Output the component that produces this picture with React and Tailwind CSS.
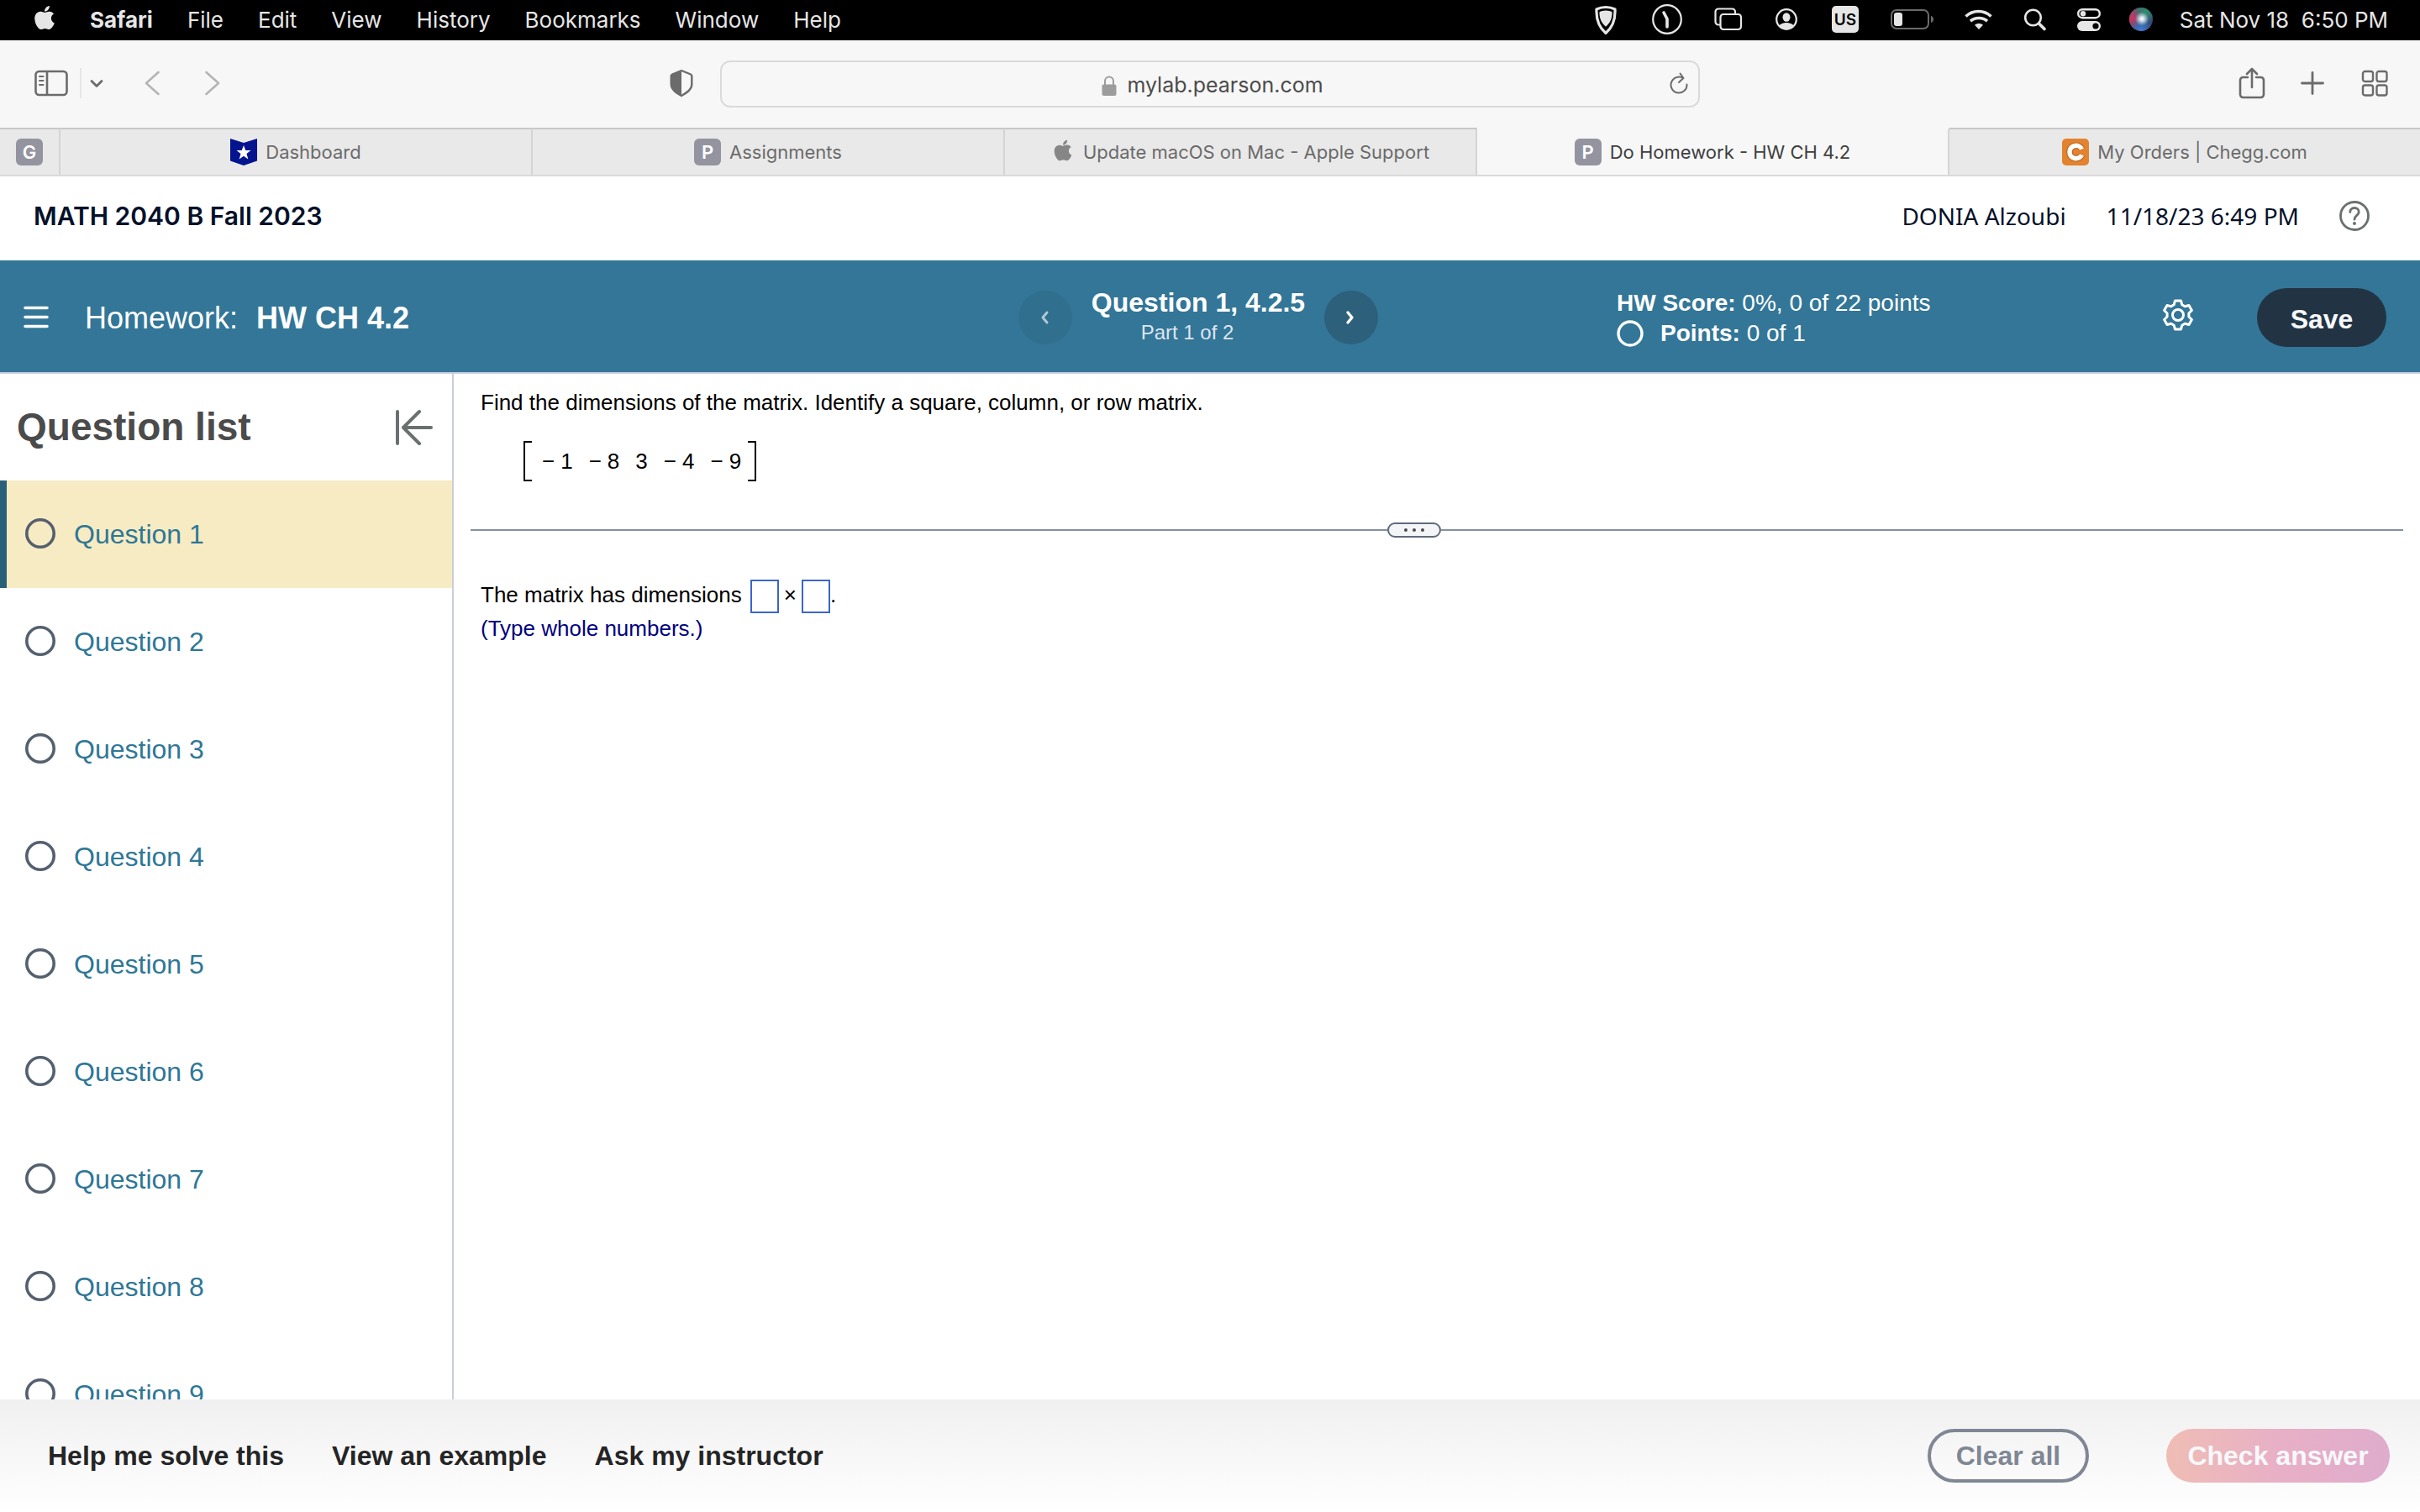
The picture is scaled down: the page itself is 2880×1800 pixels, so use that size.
import React, { useState } from 'react';
import { FaApple } from 'react-icons/fa';

const menus = ['File', 'Edit', 'View', 'History', 'Bookmarks', 'Window', 'Help'];
const questions = [1, 2, 3, 4, 5, 6, 7, 8, 9];
const matrix = ['1', '8', '3', '4', '9'];

// macOS menu bar
const MenuBar = () => {
  return (
    <div className="flex h-12 shrink-0 items-center justify-between bg-black pb-0.5 pl-10 pr-[38px] font-[Inter,sans-serif] text-[26px] text-[#e6e6e6]">
      <nav className="flex items-center gap-[41px]">
        <button type="button" aria-label="Apple menu" className="-mt-1 w-[26px]">
          <FaApple className="h-8 w-[26px]" />
        </button>
        <button type="button" className="font-bold">Safari</button>
        {menus.map((menu) => (
          <button type="button" key={menu}>{menu}</button>
        ))}
      </nav>
      <div className="flex items-center gap-8">
        <div className="flex items-center gap-[34px]">
          {/* Shield */}
          <svg className="h-9 w-[34px]" viewBox="0 0 34 36" fill="none">
            <path d="M13 3.500C9 3.500 5 4.500 2 6c-.5 10 1 20 11 28.500C23 26 24.500 16 24 6c-3-1.500-7-2.500-11-2.500z" stroke="#e6e6e6" strokeWidth="3.200" strokeLinejoin="round" />
            <path d="M13 7.500c-3 0-5.500.7-7.500 1.800-.2 6.500 1.500 12.500 7.500 17.500 6-5 7.700-11 7.500-17.500C18.500 8.200 16 7.500 13 7.500z" fill="#e6e6e6" />
          </svg>
          {/* Clock */}
          <svg className="h-9 w-10" viewBox="0 0 40 36" fill="none" stroke="#e6e6e6">
            <circle cx="18" cy="18" r="16.800" strokeWidth="2.200" />
            <path d="M14 10l4 7.500V27" strokeWidth="3.600" strokeLinecap="round" strokeLinejoin="round" />
          </svg>
          {/* Windows */}
          <svg className="h-7 w-[38px]" viewBox="0 0 38 28" fill="none" stroke="#e6e6e6" strokeWidth="2.200">
            <path d="M7 20.500H5A3.500 3.500 0 0 1 1.500 17V5A3.500 3.500 0 0 1 5 1.500h16.500A3.500 3.500 0 0 1 25 5v2" />
            <rect x="7.500" y="8" width="24.500" height="18" rx="3.500" />
          </svg>
          {/* User */}
          <svg className="h-7 w-[34px]" viewBox="0 0 34 28" fill="none">
            <circle cx="14" cy="14" r="11.800" stroke="#e6e6e6" strokeWidth="2.200" />
            <ellipse cx="14" cy="11.500" rx="4.500" ry="5.200" fill="#e6e6e6" />
            <path d="M5 22c2-3 5.500-4 9-4s7 1 9 4c-5 5-13 5-18 0z" fill="#e6e6e6" />
          </svg>
          {/* Input source */}
          <svg className="h-8 w-9" viewBox="0 0 36 32">
            <rect width="32" height="32" rx="5" fill="#e6e6e6" />
            <text x="16" y="23" textAnchor="middle" fontFamily="Inter" fontSize="19" fontWeight="600" fill="#000">US</text>
          </svg>
          {/* Battery */}
          <svg className="h-6 w-[54px]" viewBox="0 0 54 24" fill="none">
            <rect x="1" y="1" width="44" height="22" rx="6" stroke="#6b6b6b" strokeWidth="2" />
            <rect x="4" y="4" width="10" height="16" rx="3" fill="#e6e6e6" />
            <path d="M48 8c4 1 4 7 0 8z" fill="#6b6b6b" />
          </svg>
          {/* Wi-Fi */}
          <svg className="h-6 w-9" viewBox="0 0 36 24" fill="none" stroke="#e6e6e6" strokeWidth="3.600">
            <path d="M1.500 8.500c8.500-8 21.500-8 30 0" />
            <path d="M7 14.200c5.500-5 14.500-5 20 0" />
            <path d="M17 24l-5-5.200c2.800-2.400 7.200-2.400 10 0z" fill="#e6e6e6" stroke="none" />
          </svg>
          {/* Search */}
          <svg className="h-7 w-[30px]" viewBox="0 0 30 28" fill="none" stroke="#e6e6e6" strokeLinecap="round">
            <circle cx="11.500" cy="12" r="9.300" strokeWidth="2.600" />
            <path d="M18.500 19l6.500 6.500" strokeWidth="3.600" />
          </svg>
          {/* Control centre */}
          <svg className="h-7 w-7" viewBox="0 0 28 28" fill="none">
            <rect x="1.200" y="2.200" width="25.600" height="10" rx="5" stroke="#e6e6e6" strokeWidth="2.400" />
            <circle cx="7" cy="7.200" r="3.200" fill="#e6e6e6" />
            <rect y="16" width="28" height="12" rx="6" fill="#e6e6e6" />
            <circle cx="22" cy="22" r="3.600" fill="#000" />
          </svg>
          {/* Siri */}
          <svg className="h-7 w-7" viewBox="0 0 28 28">
            <defs>
              <linearGradient id="siriBase" x1="0" y1="0" x2="1" y2="1">
                <stop offset="0" stopColor="#5b6673" />
                <stop offset="1" stopColor="#2a3f78" />
              </linearGradient>
              <radialGradient id="siriPink" cx="0.1" cy="0.45" r="0.5">
                <stop offset="0" stopColor="#d3335f" />
                <stop offset="1" stopColor="#d3335f" stopOpacity="0" />
              </radialGradient>
              <radialGradient id="siriGreen" cx="0.7" cy="0.15" r="0.5">
                <stop offset="0" stopColor="#2b8f68" />
                <stop offset="1" stopColor="#2b8f68" stopOpacity="0" />
              </radialGradient>
              <radialGradient id="siriBlue" cx="0.5" cy="0.95" r="0.5">
                <stop offset="0" stopColor="#3b7fd4" />
                <stop offset="1" stopColor="#3b7fd4" stopOpacity="0" />
              </radialGradient>
              <radialGradient id="siriGlow" cx="0.54" cy="0.48" r="0.3">
                <stop offset="0" stopColor="#fff" />
                <stop offset="0.35" stopColor="#e8f6ff" stopOpacity="0.8" />
                <stop offset="1" stopColor="#a8e0f0" stopOpacity="0" />
              </radialGradient>
            </defs>
            <circle cx="14" cy="14" r="14" fill="url(#siriBase)" />
            <circle cx="14" cy="14" r="14" fill="url(#siriPink)" />
            <circle cx="14" cy="14" r="14" fill="url(#siriGreen)" />
            <circle cx="14" cy="14" r="14" fill="url(#siriBlue)" />
            <circle cx="14" cy="14" r="14" fill="url(#siriGlow)" />
          </svg>
        </div>
        <span className="whitespace-pre">Sat Nov 18  6:50 PM</span>
      </div>
    </div>
  );
};

// Safari toolbar with the address field
const Toolbar = () => {
  return (
    <div className="grid h-[104px] shrink-0 grid-cols-[1fr_1166px_1fr] items-center bg-[#f7f7f7] font-[Inter,sans-serif] text-[#6b6b6b]">
      <div className="flex items-center justify-between pb-0.5 pl-[41px] pr-8">
        <div className="flex items-center">
          <button type="button" aria-label="Show sidebar">
            <svg className="h-8 w-10" viewBox="0 0 40 32" fill="none" stroke="currentColor" strokeWidth="2.600">
              <rect x="1.500" y="2" width="37" height="28" rx="4" />
              <path d="M15 2v28" />
              <path d="M6 8h4.500M6 13h4.500M6 18h4.500" strokeWidth="2" strokeLinecap="round" />
            </svg>
          </button>
          <span className="ml-3.5 h-9 w-0.5 bg-[#e6e6e6]" />
          <button type="button" aria-label="Tab groups" className="ml-2.5">
            <svg className="h-4 w-4" viewBox="0 0 16 16" fill="none" stroke="currentColor" strokeWidth="2.800" strokeLinecap="round" strokeLinejoin="round">
              <path d="M2 5.500l6 6 6-6" />
            </svg>
          </button>
          <button type="button" aria-label="Back" className="ml-12 text-[#b4b4b4]">
            <svg className="h-8 w-5" viewBox="0 0 20 32" fill="none" stroke="currentColor" strokeWidth="2.600" strokeLinecap="round" strokeLinejoin="round">
              <path d="M17.500 3L3 16l14.500 13" />
            </svg>
          </button>
          <button type="button" aria-label="Forward" className="ml-[52px] text-[#b4b4b4]">
            <svg className="h-8 w-5" viewBox="0 0 20 32" fill="none" stroke="currentColor" strokeWidth="2.600" strokeLinecap="round" strokeLinejoin="round">
              <path d="M2.500 3L17 16 2.500 29" />
            </svg>
          </button>
        </div>
        <button type="button" aria-label="Privacy report">
          <svg className="h-[34px] w-7" viewBox="0 0 28 34" fill="none">
            <path d="M14 2L25 6.500c.8.300 1.300 1 1.300 2V18c0 7-7 11-12.300 14C8.700 29 1.700 25 1.700 18V8.500c0-1 .5-1.700 1.300-2z" stroke="currentColor" strokeWidth="2.400" strokeLinejoin="round" />
            <path d="M14 2v30C8.700 29 1.700 25 1.700 18V8.500c0-1 .5-1.700 1.300-2z" fill="currentColor" />
          </svg>
        </button>
      </div>
      <div className="flex h-14 items-center rounded-xl border-2 border-[#dadada] pl-10 pr-2.5">
        <div className="flex flex-1 items-center justify-center gap-3 pt-1">
          <svg className="h-6 w-[18px] text-[#9c9c9c]" viewBox="0 0 18 24" fill="none">
            <path d="M4 11V6.500a5 5 0 0 1 10 0V11" stroke="currentColor" strokeWidth="2" />
            <rect x="0.500" y="10.500" width="17" height="13.500" rx="2" fill="currentColor" />
          </svg>
          <span className="text-[25px] text-[#4b4b4b]">mylab.pearson.com</span>
        </div>
        <button type="button" aria-label="Reload">
          <svg className="h-7 w-6" viewBox="0 0 24 28" fill="none" stroke="currentColor" strokeWidth="2" strokeLinecap="round" strokeLinejoin="round">
            <path d="M20.500 14.500A9.500 9.500 0 1 1 16 7" />
            <path d="M12.500 1.500l4 5.500-5.500 5" />
          </svg>
        </button>
      </div>
      <div className="flex items-center justify-end pb-0.5 pr-[38px]">
        <button type="button" aria-label="Share">
          <svg className="h-10 w-8" viewBox="0 0 32 40" fill="none" stroke="currentColor" strokeWidth="2.600" strokeLinecap="round" strokeLinejoin="round">
            <path d="M11 13H5.500A3.500 3.500 0 0 0 2 16.500v17A3.500 3.500 0 0 0 5.500 37h21a3.500 3.500 0 0 0 3.500-3.500v-17a3.500 3.500 0 0 0-3.500-3.500H21" />
            <path d="M16 25V3M10 9l6-6 6 6" />
          </svg>
        </button>
        <button type="button" aria-label="New tab" className="ml-[42px]">
          <svg className="h-7 w-7" viewBox="0 0 28 28" fill="none" stroke="currentColor" strokeWidth="2.800" strokeLinecap="round">
            <path d="M14 1.500v25M1.500 14h25" />
          </svg>
        </button>
        <button type="button" aria-label="Tab overview" className="ml-11">
          <svg className="h-8 w-8" viewBox="0 0 32 32" fill="none" stroke="currentColor" strokeWidth="2.400">
            <rect x="2" y="2" width="12" height="12" rx="2.500" />
            <rect x="18.500" y="2" width="12" height="12" rx="2.500" />
            <rect x="2" y="18.500" width="12" height="12" rx="2.500" />
            <rect x="18.500" y="18.500" width="12" height="12" rx="2.500" />
          </svg>
        </button>
      </div>
    </div>
  );
};

const LetterIcon = ({ letter }) => (
  <span className="flex h-8 w-8 shrink-0 items-center justify-center rounded-md bg-[#9494a1] text-[22px] font-semibold text-white">
    {letter}
  </span>
);

const Tab = ({ icon, label, active }) => (
  <button
    type="button"
    className={
      active
        ? 'flex flex-1 items-center justify-center gap-2.5 border-r-2 border-t-2 border-r-[#d4d4d4] border-t-[#f7f7f7] bg-[#f7f7f7] text-[#3f3f3f]'
        : 'flex flex-1 items-center justify-center gap-2.5 border-r-2 border-t-2 border-r-[#d4d4d4] border-t-[#c8c8c8] bg-[#e9e9e9] last:border-r-0'
    }
  >
    {icon}
    <span className="whitespace-nowrap">{label}</span>
  </button>
);

const TabBar = () => {
  return (
    <div className="flex h-[58px] shrink-0 border-b-2 border-[#dadada] font-[Inter,sans-serif] text-[22px] text-[#6b6b6b]">
      <button type="button" aria-label="Pinned tab" className="flex w-[72px] items-center border-r-2 border-t-2 border-r-[#d4d4d4] border-t-[#c8c8c8] bg-[#e9e9e9] pl-[19px]">
        <LetterIcon letter="G" />
      </button>
      <Tab
        label="Dashboard"
        icon={
          <svg className="h-8 w-8" viewBox="0 0 32 32">
            <path d="M0 0l16 5L32 0v26.500L16 32 0 26.500z" fill="#04148f" />
            <path d="M16 8l2.300 6h6.200l-5 4 1.800 6.500L16 20.700l-5.300 3.800 1.800-6.500-5-4h6.200z" fill="#fff" />
          </svg>
        }
      />
      <Tab label="Assignments" icon={<LetterIcon letter="P" />} />
      <Tab label="Update macOS on Mac - Apple Support" icon={<FaApple className="-mt-1 h-7 w-7 text-[#868686]" />} />
      <Tab label="Do Homework - HW CH 4.2" icon={<LetterIcon letter="P" />} active />
      <Tab
        label="My Orders | Chegg.com"
        icon={
          <svg className="h-8 w-8" viewBox="0 0 32 32" fill="none">
            <rect width="32" height="32" rx="5" fill="#e3822f" />
            <path d="M23.500 12.500C21 6.500 9 6.500 9 16s12 9.500 14.500 3.500" stroke="#b9651d" strokeWidth="7.500" />
            <path d="M23.500 12.500C21 6.500 9 6.500 9 16s12 9.500 14.500 3.500" stroke="#fff" strokeWidth="5.500" />
          </svg>
        }
      />
    </div>
  );
};

// Course name, user and date
const CourseHeader = () => {
  return (
    <header className="flex h-[100px] shrink-0 items-center justify-between bg-white pl-10 pr-[60px] pb-1.5 text-[#05112a]">
      <h1 className="font-[Inter,sans-serif] text-[30px] font-semibold">MATH 2040 B Fall 2023</h1>
      <div className="flex items-center gap-12 font-['Noto_Sans',sans-serif] text-[28px]">
        <span>DONIA Alzoubi</span>
        <span>11/18/23 6:49 PM</span>
        <button type="button" aria-label="Help">
          <svg className="h-9 w-9" viewBox="0 0 36 36" fill="none" stroke="#6a7070" strokeWidth="2.800">
            <circle cx="18" cy="18" r="16.500" />
            <path d="M12.800 13.500c0-3 2.300-5 5.200-5s5.200 2 5.200 4.700c0 4.300-5.200 4-5.200 9" strokeLinecap="round" />
            <circle cx="18" cy="27" r="2" fill="#6a7070" stroke="none" />
          </svg>
        </button>
      </div>
    </header>
  );
};

const AssignmentBar = () => {
  return (
    <div className="grid h-[135px] shrink-0 grid-cols-[1212fr_428fr_1240fr] items-center border-b-2 border-[#c6cddb] bg-[#337697] pt-0.5 text-white">
      <div className="flex items-center pl-[27px] pt-0.5 text-4xl">
        <button type="button" aria-label="Menu" className="pb-0.5">
          <svg className="h-8 w-8" viewBox="0 0 32 32" fill="none" stroke="#fff" strokeWidth="3.600" strokeLinecap="round">
            <path d="M3 4.500h26M3 15.500h26M3 26.500h26" />
          </svg>
        </button>
        <span className="ml-[42px]">Homework:</span>
        <span className="ml-[22px] font-bold">HW CH 4.2</span>
      </div>
      <div className="flex items-center justify-between">
        <button type="button" aria-label="Previous question" disabled className="flex h-16 w-16 items-center justify-center rounded-full bg-[#316f8e]">
          <svg className="h-5 w-5" viewBox="0 0 20 20" fill="none" stroke="#aec8d5" strokeWidth="3" strokeLinecap="round" strokeLinejoin="round">
            <path d="M12 4l-5 6 5 6" />
          </svg>
        </button>
        <div className="text-center">
          <div className="text-[32px] leading-9 font-bold">Question 1, 4.2.5</div>
          <div className="pr-[26px] text-2xl leading-9 text-[#dfe5f1]">Part 1 of 2</div>
        </div>
        <button type="button" aria-label="Next question" className="flex h-16 w-16 items-center justify-center rounded-full bg-[#2d607b]">
          <svg className="h-5 w-5" viewBox="0 0 20 20" fill="none" stroke="#fff" strokeWidth="3.400" strokeLinecap="round" strokeLinejoin="round">
            <path d="M6 4l5 6-5 6" />
          </svg>
        </button>
      </div>
      <div className="flex items-center justify-end pr-10">
        <div className="mr-auto pl-[284px] pt-0.5 text-[28px] leading-9">
          <div>
            <b>HW Score:</b> 0%, 0 of 22 points
          </div>
          <div className="flex items-center">
            <svg className="mr-5 h-8 w-8" viewBox="0 0 32 32" fill="none" stroke="#fff" strokeWidth="3.400">
              <circle cx="16" cy="16" r="14" />
            </svg>
            <span>
              <b>Points:</b> 0 of 1
            </span>
          </div>
        </div>
        <button type="button" aria-label="Settings" className="pb-1.5">
          <svg className="h-[38px] w-9" viewBox="0 0 36 38" fill="none" stroke="#fff" strokeWidth="3" strokeLinejoin="round">
            <path d="M14.500 2h7l1.300 4.800 3.400 2 4.800-1.300 3.400 6-3.500 3.500v4l3.500 3.500-3.400 6-4.800-1.300-3.400 2L21.500 36h-7l-1.300-4.800-3.400-2L5 30.500l-3.400-6L5.100 21v-4l-3.500-3.500 3.400-6 4.800 1.300 3.400-2z" />
            <circle cx="18" cy="19" r="6.500" />
          </svg>
        </button>
        <button type="button" className="ml-[76px] h-[70px] w-[154px] rounded-full bg-[#223443] pt-1 text-[32px] font-bold text-[#f7f8fb]">
          Save
        </button>
      </div>
    </div>
  );
};

const QuestionList = ({ current, onSelect }) => {
  return (
    <aside className="flex w-[540px] shrink-0 flex-col overflow-hidden border-r-2 border-[#c9cedb]">
      <div className="flex h-[127px] shrink-0 items-center justify-between pl-5 pr-[22px]">
        <h2 className="text-[46px] font-bold text-[#4b4b4b]">Question list</h2>
        <button type="button" aria-label="Collapse question list">
          <svg className="h-11 w-12" viewBox="0 0 48 44" fill="none" stroke="#6a7070" strokeWidth="4" strokeLinecap="round" strokeLinejoin="round">
            <path d="M5 3v38M45 22H12M31 3L12 22l19 19" />
          </svg>
        </button>
      </div>
      <ul>
        {questions.map((number) => (
          <li key={number}>
            <button
              type="button"
              onClick={() => onSelect(number)}
              className={
                number === current
                  ? 'flex h-32 w-full items-center border-l-8 border-[#28607a] bg-[#f7ebc3] pl-[22px] text-[32px] text-[#2e7797]'
                  : 'flex h-32 w-full items-center border-l-8 border-transparent pl-[22px] text-[32px] text-[#2e7797]'
              }
            >
              <svg className="mr-[22px] mb-0.5 h-9 w-9" viewBox="0 0 36 36" fill="none" stroke="#55606e" strokeWidth="3.600">
                <circle cx="18" cy="18" r="16.200" />
              </svg>
              Question {number}
            </button>
          </li>
        ))}
      </ul>
    </aside>
  );
};

const Exercise = () => {
  return (
    <main className="flex-1 px-5 pt-4 text-[26px] leading-9 text-black">
      <p className="pl-3">Find the dimensions of the matrix. Identify a square, column, or row matrix.</p>
      <div className="mt-7 ml-[63px] flex h-12 w-fit items-stretch">
        <span className="w-2.5 border-2 border-r-0 border-black" />
        <div className="flex items-center gap-[19px] pl-3 pr-2">
          {matrix.map((value) => (
            <span key={value} className="flex gap-[7px]">
              {value !== '3' && <span>−</span>}
              {value}
            </span>
          ))}
        </div>
        <span className="w-2.5 border-2 border-l-0 border-black" />
      </div>
      <div className="mt-[49px] flex items-center">
        <span className="h-0.5 flex-[20] bg-[#8590a2]" />
        <button type="button" aria-label="Resize panes" className="flex h-[18px] w-16 items-center justify-center gap-1.5 rounded-full border-2 border-[#5f6b7c] bg-[#f4f5f7]">
          <span className="h-1 w-1 rounded-full bg-[#4b4b4b]" />
          <span className="h-1 w-1 rounded-full bg-[#4b4b4b]" />
          <span className="h-1 w-1 rounded-full bg-[#4b4b4b]" />
        </button>
        <span className="h-0.5 flex-[21] bg-[#8590a2]" />
      </div>
      <div className="mt-[50px] flex items-start pl-3">
        <span>The matrix has dimensions</span>
        <input type="text" aria-label="Rows" className="ml-2.5 h-10 w-[34px] border-2 border-[#3b66c8]" />
        <span className="mx-1.5">×</span>
        <input type="text" aria-label="Columns" className="h-10 w-[34px] border-2 border-[#3b66c8]" />
        <span>.</span>
      </div>
      <p className="pl-3 text-[#00007f]">(Type whole numbers.)</p>
    </main>
  );
};

const Footer = () => {
  return (
    <footer className="flex h-[134px] shrink-0 items-center justify-between bg-linear-to-b from-[#f0f0f0] to-white pl-[57px] pr-9 text-[32px] font-bold text-[#252525]">
      <div className="flex items-center gap-[57px]">
        <button type="button">Help me solve this</button>
        <button type="button">View an example</button>
        <button type="button">Ask my instructor</button>
      </div>
      <div className="flex items-center gap-[92px]">
        <button type="button" className="h-16 w-48 rounded-full border-4 border-[#7f8794] text-[#7f8794]">Clear all</button>
        <button type="button" disabled className="h-16 w-[266px] rounded-full bg-linear-to-r from-[#efbdb4] via-[#e8b0c6] to-[#dfaccd] text-[#f7f8fb]">
          Check answer
        </button>
      </div>
    </footer>
  );
};

const App = () => {
  const [current, setCurrent] = useState(1);

  return (
    <div className="flex h-screen flex-col overflow-hidden bg-white font-['Liberation_Sans',Arial,sans-serif]">
      <MenuBar />
      <Toolbar />
      <TabBar />
      <CourseHeader />
      <AssignmentBar />
      <div className="flex min-h-0 flex-1">
        <QuestionList current={current} onSelect={setCurrent} />
        <Exercise />
      </div>
      <Footer />
    </div>
  );
};

export default App;
